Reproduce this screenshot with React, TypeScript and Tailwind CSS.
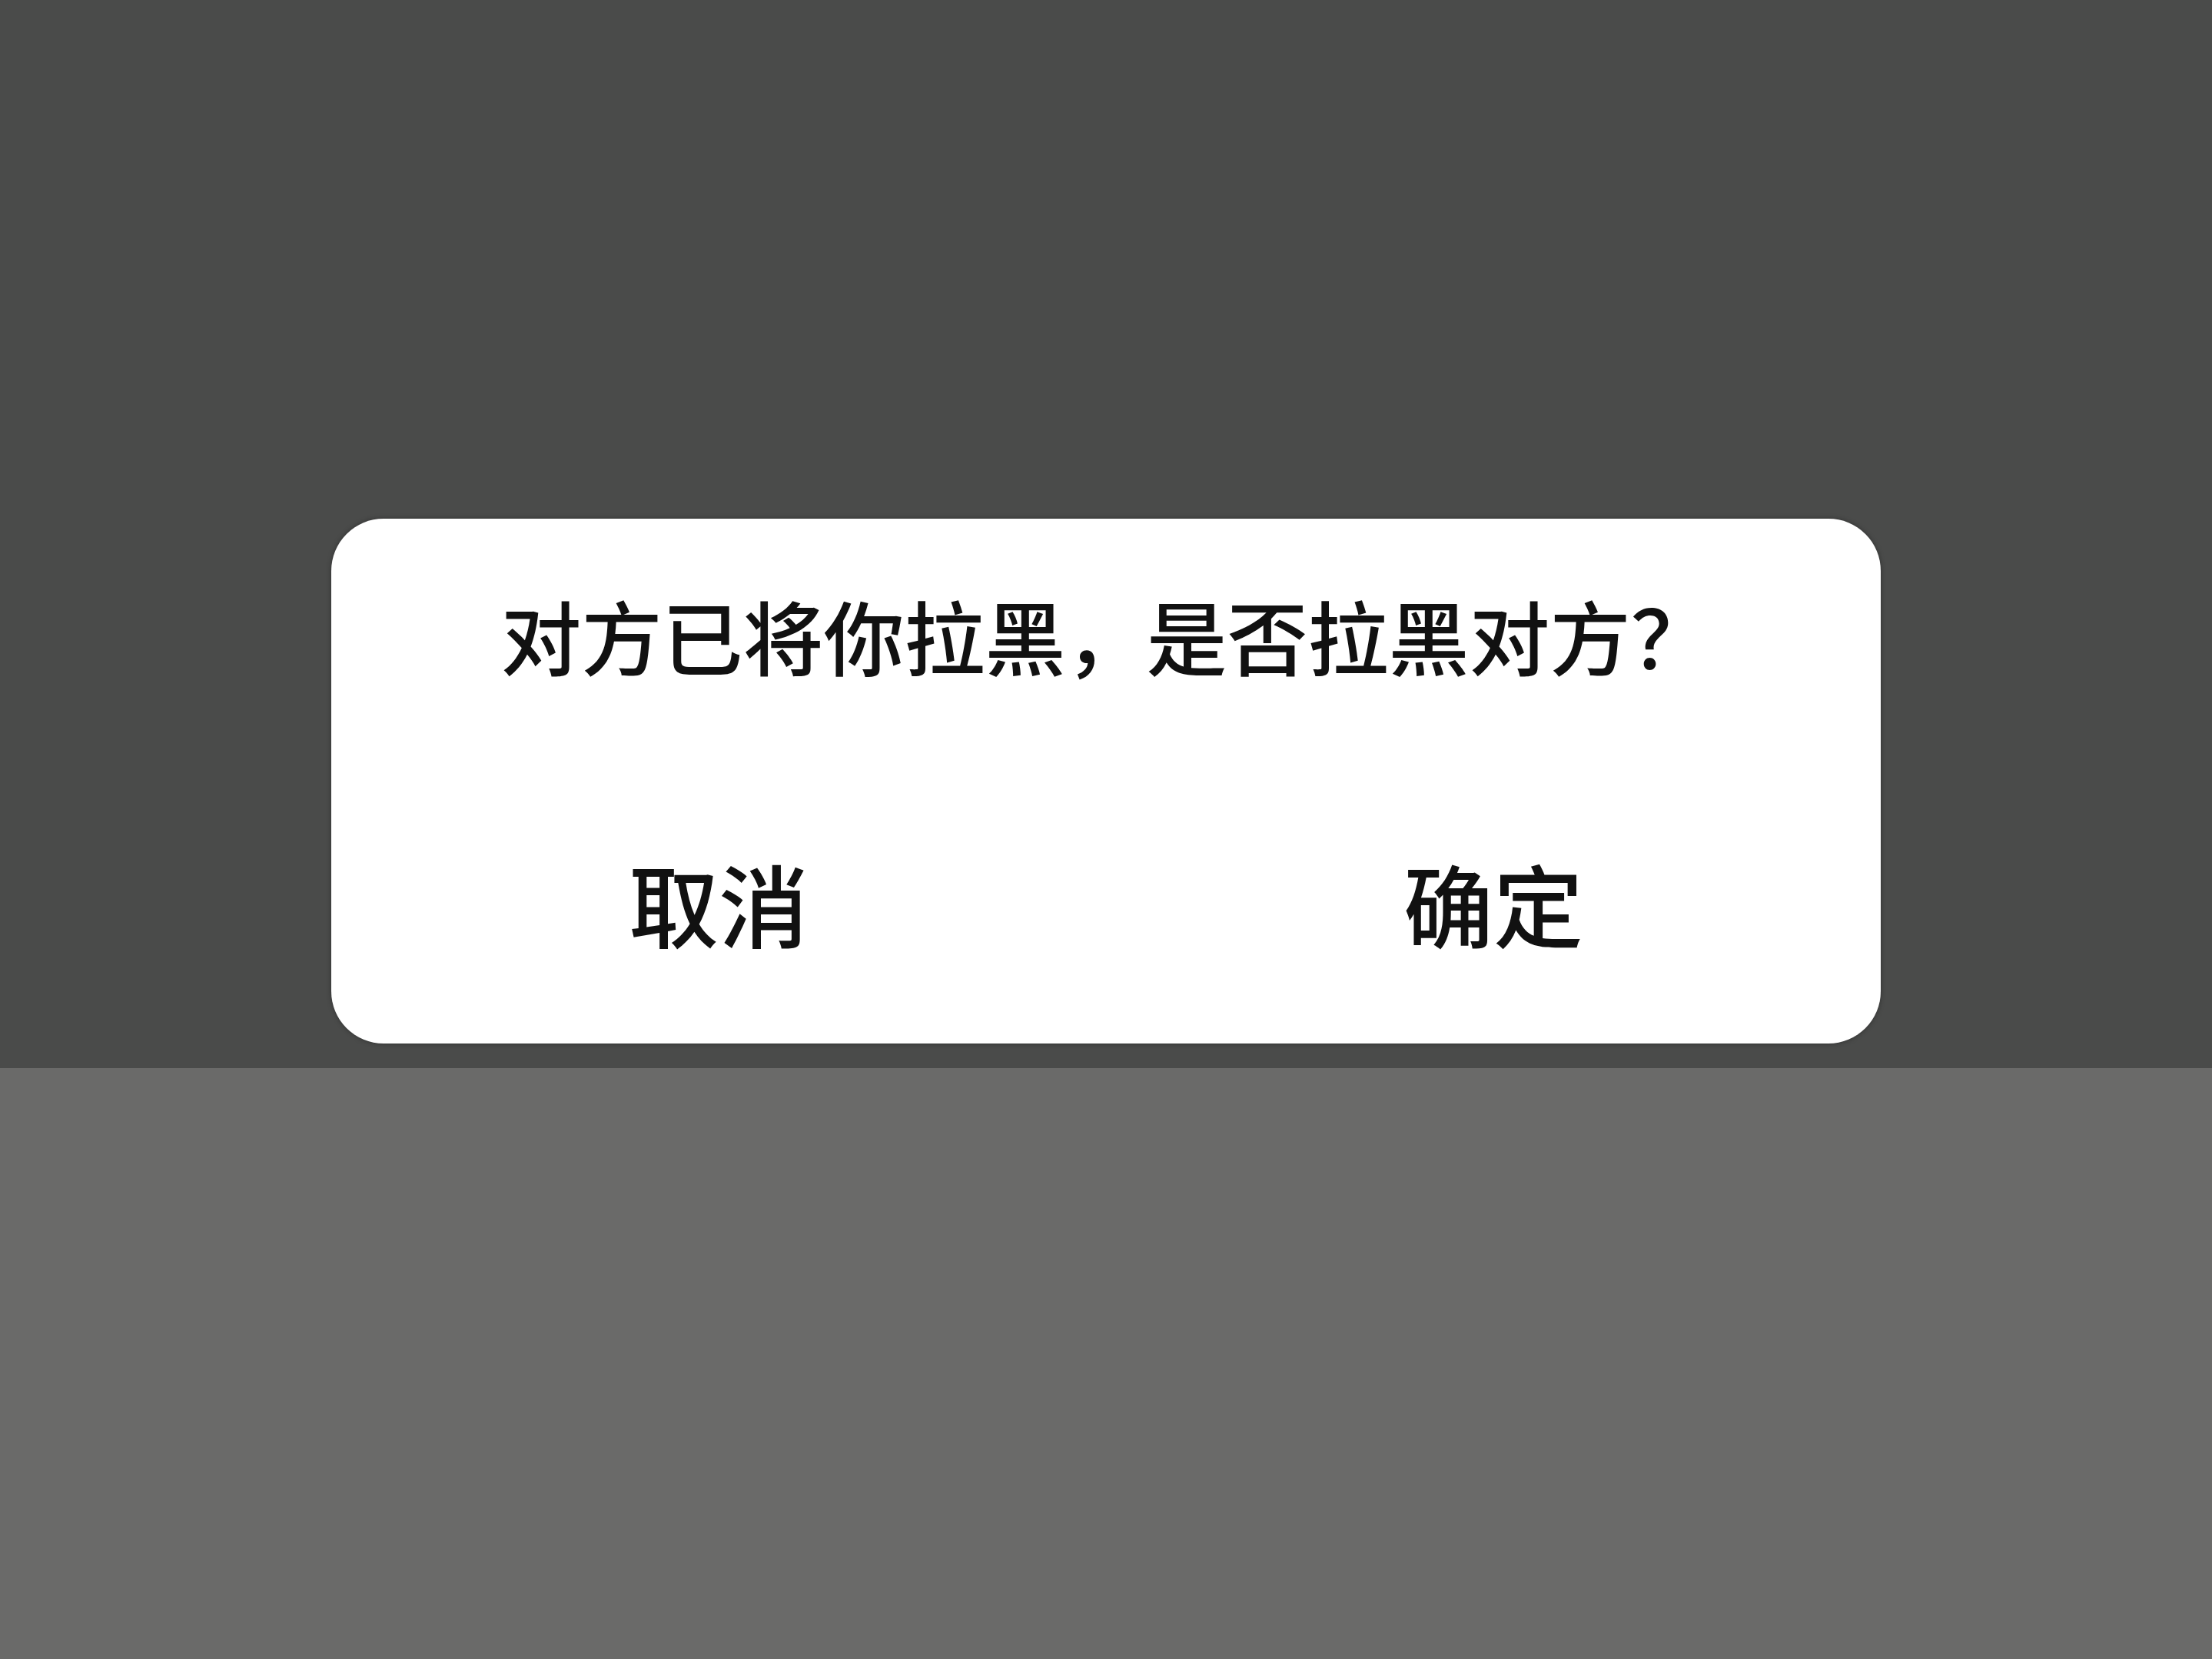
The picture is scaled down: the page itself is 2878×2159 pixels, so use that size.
export default function App() {
  const font = {
    fontFamily: '"Noto Sans CJK SC", "Noto Sans", sans-serif',
  };

  return (
    <main className="flex min-h-screen w-full flex-col bg-[#6a6a69]" style={font}>
      {/* dimmed page behind the dialog */}
      <div className="flex h-[1390px] w-full justify-center bg-[#4a4b4a] pt-[675px]">
        <div className="flex h-[683px] w-[2016px] flex-col rounded-[68px] bg-white shadow-[0_0_6px_rgba(0,0,0,0.35)]">
          <p className="pt-[98px] text-center text-[105px] leading-none font-medium text-[#111]">
            对方已将你拉黑，是否拉黑对方？
          </p>
          <div className="mt-[238px] grid grid-cols-2">
            <button className="text-center text-[117px] leading-none font-medium text-[#111]">
              取消
            </button>
            <button className="text-center text-[117px] leading-none font-medium text-[#111]">
              确定
            </button>
          </div>
        </div>
      </div>
      <div className="flex-1" />
    </main>
  );
}
